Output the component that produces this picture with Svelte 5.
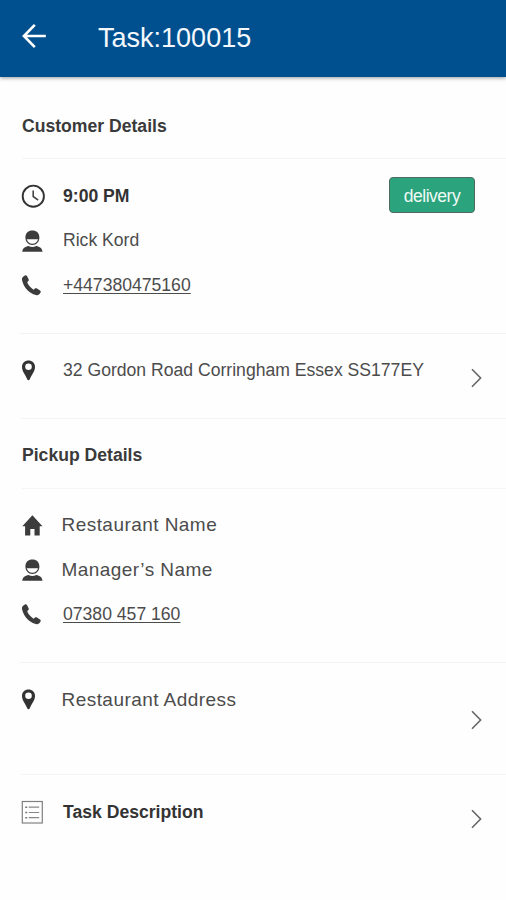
<script lang="ts">
	type IconName = 'clock' | 'person' | 'phone' | 'pin' | 'home' | 'list';

	interface Line {
		icon: IconName;
		text: string;
		kind?: 'strong' | 'wide' | 'link';
		tag?: string;
	}

	const customer: Line[] = [
		{ icon: 'clock', text: '9:00 PM', kind: 'strong', tag: 'delivery' },
		{ icon: 'person', text: 'Rick Kord' },
		{ icon: 'phone', text: '+447380475160', kind: 'link' },
	];

	const pickup: Line[] = [
		{ icon: 'home', text: 'Restaurant Name', kind: 'wide' },
		{ icon: 'person', text: 'Manager’s Name', kind: 'wide' },
		{ icon: 'phone', text: '07380 457 160', kind: 'link' },
	];
</script>

{#snippet icon(name: IconName)}
	<svg class="icon" width="26" height="26" viewBox="0 0 26 26" aria-hidden="true">
		{#if name === 'clock'}
			<circle cx="13.3" cy="13.2" r="10.6" fill="none" stroke="#333" stroke-width="1.9" />
			<path d="M13.2 7.5v6l5 3.6" fill="none" stroke="#444" stroke-width="1.6" />
		{:else if name === 'person'}
			<path d="M5.4 9.6C5.4 5 8.400 2.600 12.400 2.600s7 2.400 7 7c0 4.200-2.900 7.500-7 7.500s-7-3.300-7-7.500z" fill="#3c3c3c" />
			<path d="M6.700 11.200h11.400c-.7 2.700-2.900 4.500-5.700 4.500s-5-1.800-5.700-4.500z" fill="#fefefe" />
			<path d="M2.300 23.800c.3-3.500 2.700-5 6.300-5.700 2.200 1.200 5.400 1.200 7.600 0 3.600.7 6 2.200 6.300 5.700z" fill="#3c3c3c" />
		{:else if name === 'phone'}
			<path d="M3.800 4.200 4.900 3.500c.9-.4 1.700-.1 2.200.8l1.500 2.900c.4.8.2 1.500-.5 2L7.200 10.300c1.200 3 3.200 5.400 6.400 7.400l1.300-1.100c.6-.5 1.400-.6 2.100-.1l3 2c.8.5 1 1.300.5 2.100l-1 1.500c-.8 1.100-2.100 1.400-3.600.9C9 20.900 3.800 15.500 2.100 8.400c-.4-1.800.1-3.200 1.700-4.200z" fill="#3c3c3c" />
		{:else if name === 'pin'}
			<path d="M8.500 2.500C4.800 2.500 2 5.200 2 8.900c0 4.800 4.100 8.400 5.200 12.400.4 1.300 2.200 1.300 2.600 0C10.900 17.300 15 13.700 15 8.900c0-3.700-2.800-6.400-6.500-6.400zm0 3a3.300 3.300 0 1 1 0 6.600 3.300 3.300 0 0 1 0-6.600z" fill="#333" fill-rule="evenodd" />
		{:else if name === 'home'}
			<path d="M12.400 3.200 2.300 14.200h2.800v9.200h5.200v-6.300h4.200v6.300h5.200v-9.200h2.800z" fill="#3c3c3c" />
		{:else}
			<rect x="2.300" y="2.500" width="20" height="21.500" fill="none" stroke="#808080" stroke-width="1.200" />
			<path d="M5.200 8.200h2M5.200 13.500h2M5.200 18.700h2" stroke="#777" stroke-width="1.600" />
			<path d="M8.700 8.200h10.500M8.700 13.500h10.500M8.700 18.700h10.500" stroke="#888" stroke-width="1.200" />
		{/if}
	</svg>
{/snippet}

{#snippet chevron()}
	<svg class="chevron" width="14" height="20" viewBox="0 0 14 20" aria-hidden="true">
		<path d="M2 1.200 10.600 10 2 18.800" fill="none" stroke="#666" stroke-width="1.600" />
	</svg>
{/snippet}

{#snippet line(item: Line)}
	<div class="line">
		{@render icon(item.icon)}
		{#if item.kind === 'link'}
			<a class="text link" href="tel:{item.text.replaceAll(' ', '')}">{item.text}</a>
		{:else}
			<span class="text {item.kind ?? ''}">{item.text}</span>
		{/if}
		{#if item.tag}
			<span class="tag">{item.tag}</span>
		{/if}
	</div>
{/snippet}

<div class="screen">
	<header>
		<svg width="26" height="26" viewBox="0 0 26 26" aria-hidden="true">
			<path d="M13.800 1.900 2.900 13l10.900 11.100M3.200 13h21.600" fill="none" stroke="#fff" stroke-width="2.600" />
		</svg>
		<h1>Task:100015</h1>
	</header>

	<h2>Customer Details</h2>
	<section class="lines">
		{#each customer as item}
			{@render line(item)}
		{/each}
	</section>
	<div class="row address">
		{@render icon('pin')}
		<span class="text">32 Gordon Road Corringham Essex SS177EY</span>
		{@render chevron()}
	</div>

	<h2 class="pickup">Pickup Details</h2>
	<section class="lines">
		{#each pickup as item}
			{@render line(item)}
		{/each}
	</section>
	<div class="row restaurant">
		{@render icon('pin')}
		<span class="text wide">Restaurant Address</span>
		{@render chevron()}
	</div>
	<div class="row description">
		{@render icon('list')}
		<span class="text strong">Task Description</span>
		{@render chevron()}
	</div>
</div>

<style>
	:global(body) {
		margin: 0;
		background: #fefefe;
	}
	.screen {
		height: 900px;
		overflow: hidden;
		background: #fefefe;
		color: #3a3a3a;
		font-family: 'Liberation Sans', Arial, sans-serif;
		font-size: 17.6px;
	}
	header {
		display: flex;
		align-items: center;
		box-sizing: border-box;
		height: 77px;
		padding: 0 21px 6px;
		gap: 51px;
		background: #00508f;
		box-shadow: 0 1px 4px rgba(0, 0, 0, 0.4);
	}
	h1 {
		margin: 4px 0 0;
		color: #f4f8fc;
		font-size: 28px;
		font-weight: 400;
		transform: scaleX(0.965);
		transform-origin: left;
	}
	h2 {
		display: flex;
		align-items: center;
		box-sizing: border-box;
		height: 82px;
		margin: 0 0 0 22px;
		padding-top: 17px;
		border-bottom: 1px solid #f5f5f5;
		font-size: 17.6px;
	}
	h2.pickup {
		height: 70px;
		padding-top: 3px;
	}
	.lines {
		display: flex;
		flex-direction: column;
		box-sizing: border-box;
		height: 175px;
		margin-left: 20px;
		padding-top: 15px;
		border-bottom: 1px solid #f3f3f3;
	}
	.pickup + .lines {
		height: 174px;
		padding-top: 14px;
	}
	.line {
		display: flex;
		align-items: center;
		height: 44.600px;
	}
	.icon {
		flex: none;
		margin-right: 17px;
	}
	.text {
		color: #4c4c4c;
		white-space: nowrap;
	}
	.strong {
		color: #333;
		font-weight: 700;
	}
	.wide {
		margin-left: -1.500px;
		font-size: 19px;
		letter-spacing: 0.450px;
	}
	.link {
		text-decoration: underline;
		text-decoration-thickness: 1px;
		text-underline-offset: 2px;
	}
	.tag {
		box-sizing: border-box;
		width: 86px;
		height: 36px;
		margin: -2px 31px 0 auto;
		border: 1.500px solid #4d6b60;
		border-radius: 4px;
		background: #2ba37c;
		color: #effaf5;
		font-size: 17.500px;
		letter-spacing: -0.500px;
		line-height: 36px;
		text-align: center;
	}
	.row {
		display: flex;
		align-items: flex-start;
		box-sizing: border-box;
		margin-left: 20px;
		padding: 24px 22px 0 0;
		border-bottom: 1px solid #f5f5f5;
	}
	.row .text {
		line-height: 26px;
	}
	.chevron {
		flex: none;
		margin: 10px 0 0 auto;
	}
	.address {
		height: 85px;
	}
	.address .text {
		line-height: 25px;
	}
	.restaurant {
		height: 112px;
	}
	.restaurant .chevron {
		margin-top: 23px;
	}
	.description {
		border-bottom: 0;
	}
</style>
